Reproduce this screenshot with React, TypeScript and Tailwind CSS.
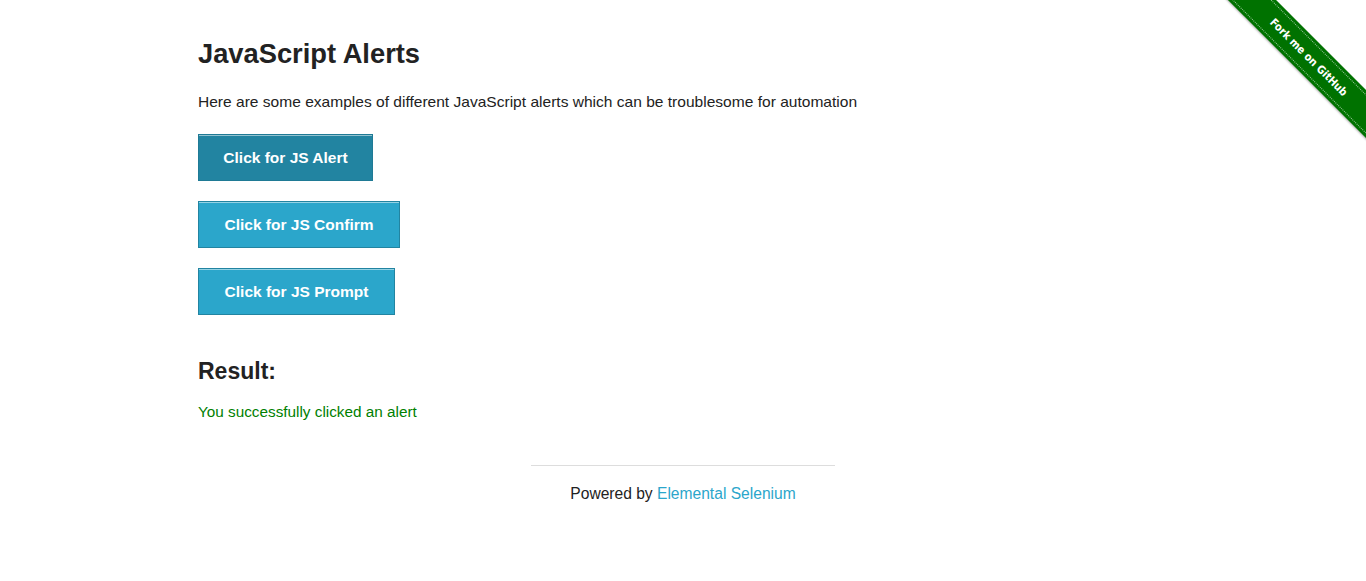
export default function App() {
    return (
        <div className="relative bg-white text-[#222222] font-['Liberation_Sans',Arial,sans-serif] pt-[38px] pb-[60px]">
            {/* Fork me ribbon */}
            <div className="absolute top-0 right-0 w-[149px] h-[149px] overflow-hidden">
                <div className="absolute left-[-8px] top-[40px] w-[200px] h-[34px] rotate-45 bg-[#007200] flex items-center shadow-[0_1px_2px_rgba(0,0,0,0.3)]">
                    <div className="w-full h-[28px] border-y border-dotted border-white/60 flex items-center justify-center">
                        <span className="text-white text-[11px] font-bold leading-none font-['DejaVu_Sans_Condensed','DejaVu_Sans',sans-serif]">
                            Fork me on GitHub
                        </span>
                    </div>
                </div>
            </div>

            <div className="mx-auto w-[1000px] px-[15px]">
                <h3 className="text-[27.3px] leading-[32px] font-bold">JavaScript Alerts</h3>
                <p className="mt-[20px] text-[15.55px] leading-[24px]">
                    Here are some examples of different JavaScript alerts which can be troublesome for automation
                </p>

                <div className="mt-[20px] flex flex-col items-start gap-[20px]">
                    <button className="w-[175px] h-[47px] bg-[#2284a1] border border-[#1f7a95] shadow-[inset_0_1px_0_rgba(255,255,255,0.5)] text-white font-bold text-[15.5px] leading-[16px] text-center">
                        Click for JS Alert
                    </button>
                    <button className="w-[202px] h-[47px] bg-[#2ba6cb] border border-[#2284a1] shadow-[inset_0_1px_0_rgba(255,255,255,0.5)] text-white font-bold text-[15.5px] leading-[16px] text-center">
                        Click for JS Confirm
                    </button>
                    <button className="w-[197px] h-[47px] bg-[#2ba6cb] border border-[#2284a1] shadow-[inset_0_1px_0_rgba(255,255,255,0.5)] text-white font-bold text-[15.5px] leading-[16px] text-center">
                        Click for JS Prompt
                    </button>
                </div>

                <h4 className="mt-[42px] text-[23px] leading-[28px] font-bold">Result:</h4>
                <p className="mt-[16px] text-[15.3px] leading-[22px] text-[#008000]">You successfully clicked an alert</p>
            </div>

            <div className="mt-[42px] flex flex-col items-center">
                <div className="w-[304px] border-t border-[#dddddd]" />
                <div className="mt-[16px] text-[15.6px] leading-[24px]">
                    Powered by <a href="#" className="text-[#2ba6cb]">Elemental Selenium</a>
                </div>
            </div>
        </div>
    );
}
